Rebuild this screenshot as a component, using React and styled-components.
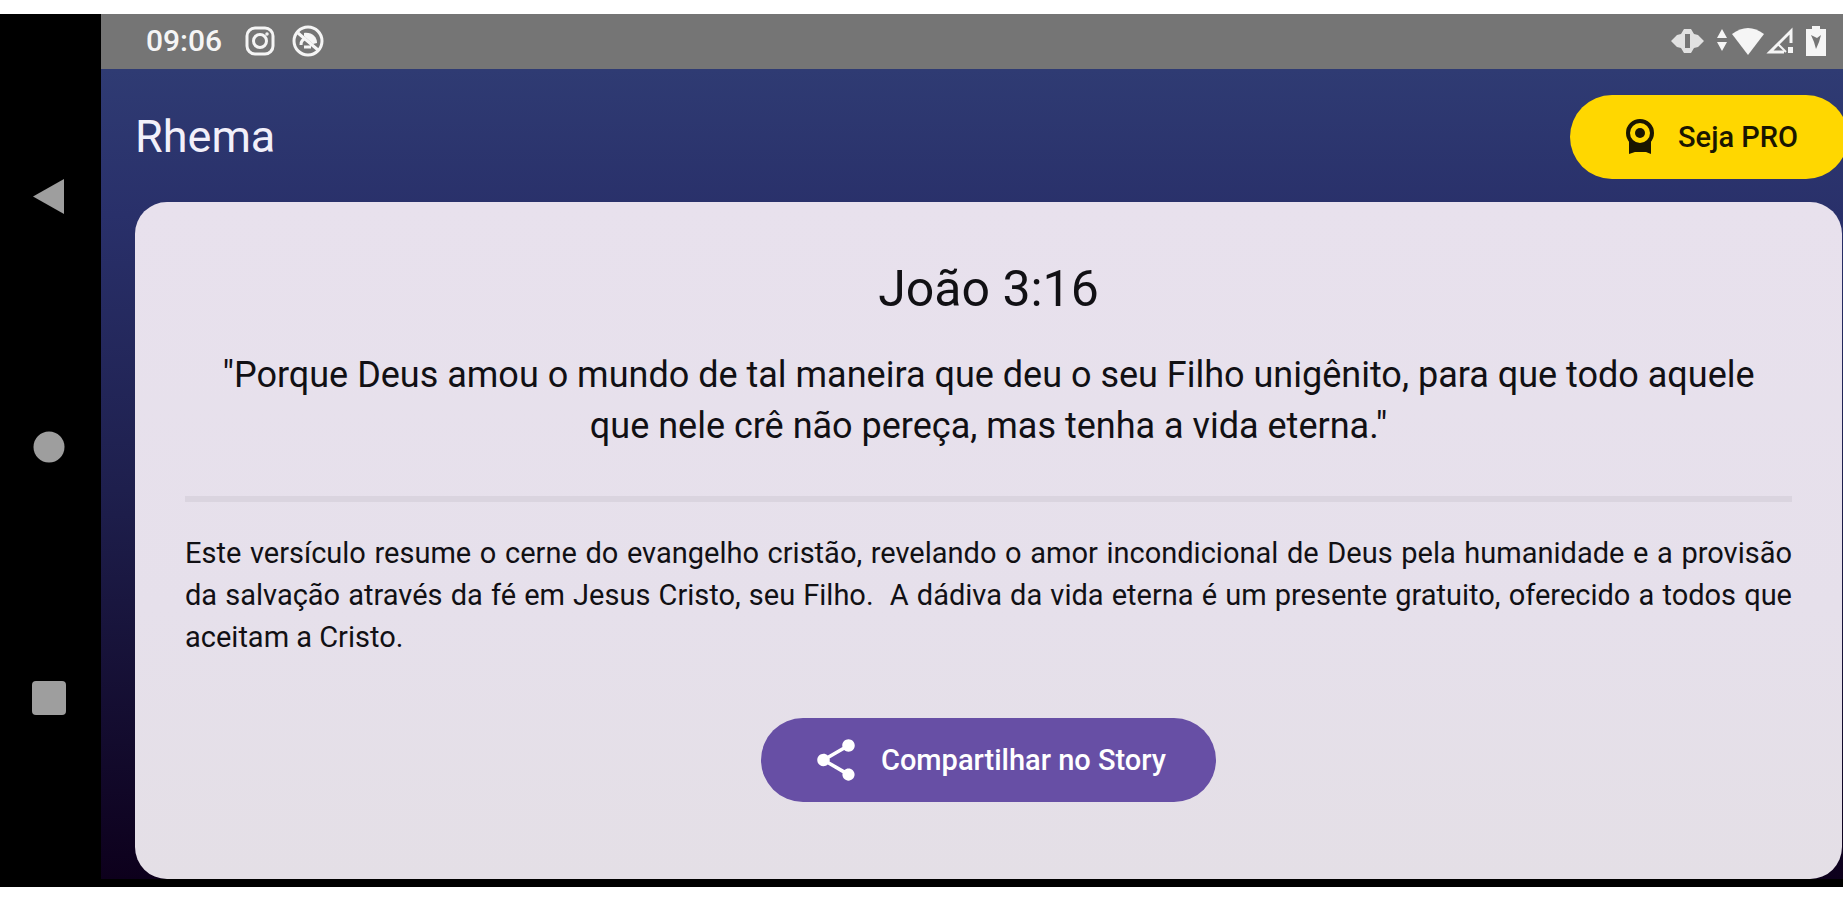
import React from 'react';
import styled, { createGlobalStyle } from 'styled-components';

const GlobalStyle = createGlobalStyle`
  * {
    box-sizing: border-box;
  }

  body {
    margin: 0;
    background: #ffffff;
    font-family: Roboto, 'Liberation Sans', sans-serif;
  }
`;

const Page = styled.div`
  display: flex;
  min-height: 100vh;
  padding: 14px 0 13px;
  overflow: hidden;
`;

const Device = styled.div`
  display: flex;
  flex: 1;
  min-width: 0;
  padding-bottom: 8px;
  background: #000000;
`;

const NavBar = styled.nav`
  display: flex;
  flex-direction: column;
  align-items: center;
  justify-content: space-around;
  flex-shrink: 0;
  width: 101px;
  padding: 56px 3px 56px 0;
`;

const NavButton = styled.button`
  display: flex;
  padding: 8px;
  border: none;
  background: none;
  color: #9e9e9e;
`;

const Screen = styled.div`
  display: flex;
  flex-direction: column;
  flex: 1;
  min-width: 0;
`;

const StatusBar = styled.div`
  display: flex;
  align-items: center;
  justify-content: space-between;
  height: 55px;
  padding: 0 17px 2px 45px;
  background: #757575;
  color: #f5f5f5;
`;

const StatusGroup = styled.div`
  display: flex;
  align-items: center;
  gap: ${(props) => props.$gap}px;
`;

const Clock = styled.span`
  margin-right: 6px;
  font-size: 30px;
  font-weight: 500;
  line-height: 32px;
`;

const Content = styled.main`
  display: flex;
  flex-direction: column;
  flex: 1;
  padding: 0 1px 0 34px;
  background: linear-gradient(#2f3b73, #29306a 18%, #1e1f4d 52%, #0d001c);
`;

const AppBar = styled.header`
  display: flex;
  align-items: center;
  justify-content: space-between;
  height: 133px;
  margin-right: -6px;
  padding-top: 2px;
`;

const AppTitle = styled.h1`
  margin: 0;
  color: #f2f0fa;
  font-size: 45px;
  font-weight: 400;
  line-height: 58px;
`;

const PillButton = styled.button`
  display: flex;
  align-items: center;
  gap: 20px;
  height: 84px;
  padding: 0 50px;
  border: none;
  border-radius: 42px;
  background: ${(props) => props.$background};
  color: ${(props) => props.$color};
  font-family: inherit;
  font-size: 29px;
  font-weight: 500;
  line-height: 42px;
  white-space: nowrap;
`;

const Card = styled.article`
  display: flex;
  flex-direction: column;
  align-items: center;
  flex: 1;
  padding: 54px 50px 76px;
  border-radius: 32px;
  background: linear-gradient(#e8e1ed, #e6e0eb 60%, #e4dfe6);
  color: #111014;
`;

const Reference = styled.h2`
  margin: 0 0 27px;
  font-size: 50px;
  font-weight: 400;
  line-height: 67px;
`;

const Verse = styled.blockquote`
  margin: 0;
  padding: 0 24px;
  font-size: 36px;
  line-height: 51px;
  text-align: center;
`;

const Divider = styled.hr`
  width: 100%;
  height: 6px;
  margin: 44px 0 30px;
  border: none;
  background: #dad4df;
`;

const Comment = styled.p`
  width: 100%;
  margin: 0 0 60px;
  font-size: 29px;
  line-height: 42px;
  text-align: justify;
`;

const BackIcon = () => (
  <svg width="36" height="36" viewBox="0 0 36 36" fill="currentColor">
    <path d="M33 1v35L2 18.500z" />
  </svg>
);

const HomeIcon = () => (
  <svg width="36" height="36" viewBox="0 0 36 36" fill="currentColor">
    <circle cx="18" cy="18" r="15.500" />
  </svg>
);

const RecentsIcon = () => (
  <svg width="36" height="36" viewBox="0 0 36 36" fill="currentColor">
    <rect x="1" y="1" width="34" height="34" rx="4" />
  </svg>
);

const InstagramIcon = () => (
  <svg width="30" height="30" viewBox="0 0 30 30" fill="none" stroke="currentColor" strokeWidth="3">
    <rect x="2" y="2" width="26" height="26" rx="8" />
    <circle cx="15" cy="15" r="6.500" />
    <circle cx="22" cy="8" r="1" strokeWidth="1.500" />
  </svg>
);

const NotificationIcon = () => (
  <svg width="32" height="32" viewBox="0 0 32 32" fill="none" stroke="currentColor" strokeWidth="3">
    <circle cx="16" cy="16" r="14" />
    <path d="M6 8l20 17M9 20c0-4 2-6 5-6M12 22h7" />
    <path d="M12 8c8-1 13 4 13 10l-4 1-9-8z" fill="currentColor" stroke="none" />
  </svg>
);

const VibrateIcon = () => (
  <svg width="33" height="26" viewBox="0 0 33 26" fill="currentColor">
    <path
      fillRule="evenodd"
      opacity="0.85"
      d="M0 13l6-6 4-1 3-5h7l3 5 4 1 6 6-6 6-4 1-3 5h-7l-3-5-4-1zM14 6v14h5V6z"
    />
  </svg>
);

const WifiIcon = () => (
  <svg width="48" height="28" viewBox="0 0 48 28" fill="currentColor">
    <path d="M1 11l5-9 5 9zM1 15h10l-5 9z" />
    <path d="M16 7q16-12 32 0L32 28z" />
  </svg>
);

const SignalIcon = () => (
  <svg width="28" height="28" viewBox="0 0 28 28" fill="none" stroke="currentColor" strokeWidth="3">
    <path d="M25 16V4L4 25h14" />
    <path d="M12 17l8 8" strokeWidth="2" />
    <path d="M22 20h5v6h-5z" fill="currentColor" stroke="none" />
  </svg>
);

const BatteryIcon = () => (
  <svg width="20" height="30" viewBox="0 0 20 30" fill="currentColor">
    <path fillRule="evenodd" d="M6 0h8v3h6v27H0V3h6zM5 9l3 7 2 7 3-7 2-7-4 3z" />
  </svg>
);

const MedalIcon = () => (
  <svg width="38" height="40" viewBox="0 0 38 40" fill="currentColor">
    <path d="M9 22h22v15l-5-2h-11l-6 2z" />
    <circle cx="20" cy="16" r="12" fill="#ffd700" stroke="currentColor" strokeWidth="4" />
    <circle cx="20" cy="16" r="5" />
  </svg>
);

const ShareIcon = () => (
  <svg width="50" height="50" viewBox="0 0 24 24" fill="currentColor">
    <path d="M18 16.080c-.76 0-1.440.3-1.960.77L8.910 12.700c.05-.23.09-.46.09-.7s-.04-.47-.09-.7l7.050-4.110c.54.5 1.250.81 2.040.81 1.660 0 3-1.340 3-3s-1.340-3-3-3-3 1.340-3 3c0 .24.04.47.09.7L8.040 9.810C7.500 9.310 6.790 9 6 9c-1.660 0-3 1.340-3 3s1.340 3 3 3c.79 0 1.500-.31 2.040-.81l7.120 4.160c-.05.21-.08.43-.08.65 0 1.610 1.310 2.920 2.920 2.920s2.920-1.310 2.920-2.920-1.310-2.920-2.920-2.920z" />
  </svg>
);

function App() {
  return (
    <>
      <GlobalStyle />
      <Page>
        <Device>
          <NavBar>
            <NavButton aria-label="Voltar">
              <BackIcon />
            </NavButton>
            <NavButton aria-label="Início">
              <HomeIcon />
            </NavButton>
            <NavButton aria-label="Recentes">
              <RecentsIcon />
            </NavButton>
          </NavBar>

          <Screen>
            <StatusBar>
              <StatusGroup $gap={17}>
                <Clock>09:06</Clock>
                <InstagramIcon />
                <NotificationIcon />
              </StatusGroup>
              <StatusGroup $gap={12}>
                <VibrateIcon />
                <StatusGroup $gap={2}>
                  <WifiIcon />
                  <SignalIcon />
                </StatusGroup>
                <BatteryIcon />
              </StatusGroup>
            </StatusBar>

            <Content>
              <AppBar>
                <AppTitle>Rhema</AppTitle>
                <PillButton $background="#ffd700" $color="#1a1600">
                  <MedalIcon />
                  Seja PRO
                </PillButton>
              </AppBar>

              <Card>
                <Reference>João 3:16</Reference>
                <Verse>
                  "Porque Deus amou o mundo de tal maneira que deu o seu Filho
                  unigênito, para que todo aquele que nele crê não pereça, mas
                  tenha a vida eterna."
                </Verse>
                <Divider />
                <Comment>
                  Este versículo resume o cerne do evangelho cristão, revelando
                  o amor incondicional de Deus pela humanidade e a provisão da
                  salvação através da fé em Jesus Cristo, seu Filho.&nbsp; A
                  dádiva da vida eterna é um presente gratuito, oferecido a
                  todos que aceitam a Cristo.
                </Comment>
                <PillButton $background="#674fa5" $color="#ffffff">
                  <ShareIcon />
                  Compartilhar no Story
                </PillButton>
              </Card>
            </Content>
          </Screen>
        </Device>
      </Page>
    </>
  );
}

export default App;
